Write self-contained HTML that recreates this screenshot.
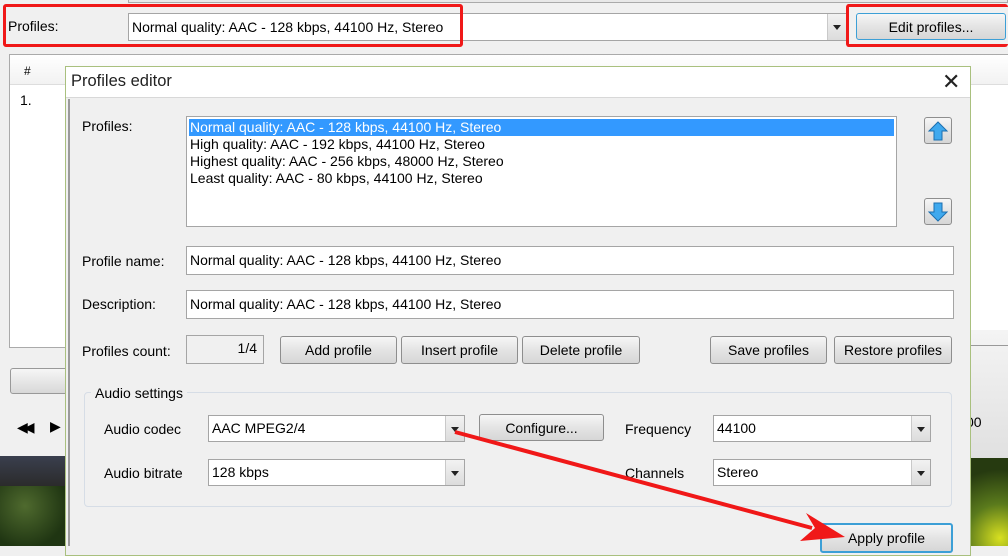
<!DOCTYPE html>
<html><head><meta charset="utf-8"><style>
*{box-sizing:border-box;margin:0;padding:0}
body{width:1008px;height:546px;overflow:hidden;background:#f0f0f0;font-family:"Liberation Sans",sans-serif;font-size:14px;color:#000;position:relative}
.a{position:absolute}
.field{position:absolute;background:#fff;border:1px solid #a5a5a5;padding:0 3px;line-height:26px;white-space:nowrap;overflow:hidden}
.btn{position:absolute;border:1px solid #8e8e8e;border-radius:3px;background:linear-gradient(#f6f6f6,#e4e4e4 50%,#d6d6d6);text-align:center;line-height:26px;white-space:nowrap}
.dd{position:absolute;top:0;right:0;bottom:0;width:19px;background:linear-gradient(#f2f2f2,#dcdcdc);border-left:1px solid #c9c9c9}
.dd:after{content:"";position:absolute;left:5px;top:11px;border-left:4px solid transparent;border-right:4px solid transparent;border-top:5px solid #222}
.red{position:absolute;border:3px solid #f01818;border-radius:3px}
</style></head><body>
<div class="a" style="left:128px;top:0;width:880px;height:3px;border:1px solid #aaa;border-top:none;background:#e8e8e8"></div>
<div class="a" style="left:8px;top:18px">Profiles:</div>
<div class="field" style="left:128px;top:13px;width:719px;height:28px">Normal quality: AAC - 128 kbps, 44100 Hz, Stereo<div class="dd"></div></div>
<div class="btn" style="left:856px;top:13px;width:150px;height:27px;border-color:#3c9fd6">Edit profiles...</div>
<div class="red" style="left:3px;top:4px;width:460px;height:43px"></div>
<div class="red" style="left:846px;top:4px;width:162px;height:43px;border-right:none"></div>
<div class="a" style="left:9px;top:54px;width:1000px;height:294px;background:#fff;border:1px solid #aaa"></div>
<div class="a" style="left:10px;top:55px;width:998px;height:30px;background:linear-gradient(#fff,#f2f2f2);border-bottom:1px solid #ddd"></div>
<div class="a" style="left:24px;top:64px;font-size:12px">#</div>
<div class="a" style="left:20px;top:92px">1.</div>
<div class="a" style="left:10px;top:368px;width:60px;height:26px;border:1px solid #999;border-radius:3px;background:linear-gradient(#f6f6f6,#d8d8d8)"></div>
<div class="a" style="left:17px;top:419px;font-size:14px;letter-spacing:-4px">◀◀</div>
<div class="a" style="left:50px;top:418px;font-size:14px">▶</div>
<div class="a" style="left:0;top:456px;width:70px;height:30px;background:linear-gradient(#3a3f4e,#2b2b2b)"></div>
<div class="a" style="left:0;top:486px;width:70px;height:60px;background:radial-gradient(circle at 25px 20px,#4f6a2e,#1f3512 70%)"></div>
<div class="a" style="left:970px;top:330px;width:38px;height:130px;background:linear-gradient(#f4f4f4,#e0e0e0)"></div>
<div class="a" style="left:970px;top:345px;width:38px;height:1px;background:#999"></div>
<div class="a" style="left:970px;top:458px;width:38px;height:88px;background:radial-gradient(circle at 30px 80px,#d8e020,#5a7a1c 40%,#263a10 80%)"></div>
<div class="a" style="left:966px;top:414px">00</div>
<div class="a" style="left:65px;top:66px;width:906px;height:490px;background:#f0f0f0;border:1px solid #a9c07e"></div>
<div class="a" style="left:66px;top:67px;width:904px;height:31px;background:#fff;border-bottom:1px solid #d8d8d8"></div>
<div class="a" style="left:71px;top:72px;font-size:16.5px;color:#222">Profiles editor</div>
<div class="a" style="left:942px;top:69px;font-size:22px;color:#222">✕</div>
<div class="a" style="left:68px;top:99px;width:2px;height:447px;background:#9a9a9a"></div>
<div class="a" style="left:82px;top:118px">Profiles:</div>
<div class="a" style="left:186px;top:116px;width:711px;height:111px;background:#fff;border:1px solid #a5a5a5;line-height:17px">
<div style="margin:2px 2px 0 2px;background:#3399ff;color:#fff;padding-left:1px">Normal quality: AAC - 128 kbps, 44100 Hz, Stereo</div>
<div style="padding-left:3px">High quality: AAC - 192 kbps, 44100 Hz, Stereo</div>
<div style="padding-left:3px">Highest quality: AAC - 256 kbps, 48000 Hz, Stereo</div>
<div style="padding-left:3px">Least quality: AAC - 80 kbps, 44100 Hz, Stereo</div></div>
<div class="btn" style="left:924px;top:117px;width:28px;height:27px"><svg width="22" height="22" viewBox="0 0 22 22" style="margin-top:2px"><path d="M11 2 L20 11 H15 V20 H7 V11 H2 Z" fill="#3fa9ee" stroke="#1b6fb0"/></svg></div>
<div class="btn" style="left:924px;top:198px;width:28px;height:27px"><svg width="22" height="22" viewBox="0 0 22 22" style="margin-top:2px"><path d="M11 20 L20 11 H15 V2 H7 V11 H2 Z" fill="#3fa9ee" stroke="#1b6fb0"/></svg></div>
<div class="a" style="left:82px;top:253px">Profile name:</div>
<div class="field" style="left:186px;top:246px;width:768px;height:29px">Normal quality: AAC - 128 kbps, 44100 Hz, Stereo</div>
<div class="a" style="left:82px;top:296px">Description:</div>
<div class="field" style="left:186px;top:290px;width:768px;height:29px">Normal quality: AAC - 128 kbps, 44100 Hz, Stereo</div>
<div class="a" style="left:82px;top:343px">Profiles count:</div>
<div class="a" style="left:186px;top:335px;width:78px;height:29px;border:1px solid #a5a5a5;text-align:right;padding:4px 6px">1/4</div>
<div class="btn" style="left:280px;top:336px;width:117px;height:28px">Add profile</div>
<div class="btn" style="left:401px;top:336px;width:117px;height:28px">Insert profile</div>
<div class="btn" style="left:522px;top:336px;width:118px;height:28px">Delete profile</div>
<div class="btn" style="left:710px;top:336px;width:117px;height:28px">Save profiles</div>
<div class="btn" style="left:834px;top:336px;width:118px;height:28px">Restore profiles</div>
<div class="a" style="left:84px;top:392px;width:868px;height:115px;border:1px solid #d6dde6;border-radius:4px"></div>
<div class="a" style="left:91px;top:385px;background:#f0f0f0;padding:0 4px">Audio settings</div>
<div class="a" style="left:104px;top:421px">Audio codec</div>
<div class="field" style="left:208px;top:415px;width:257px;height:27px;line-height:25px">AAC MPEG2/4<div class="dd"></div></div>
<div class="btn" style="left:479px;top:414px;width:125px;height:27px">Configure...</div>
<div class="a" style="left:625px;top:421px">Frequency</div>
<div class="field" style="left:713px;top:415px;width:218px;height:27px;line-height:25px">44100<div class="dd"></div></div>
<div class="a" style="left:104px;top:465px">Audio bitrate</div>
<div class="field" style="left:208px;top:459px;width:257px;height:27px;line-height:25px">128 kbps<div class="dd"></div></div>
<div class="a" style="left:625px;top:465px">Channels</div>
<div class="field" style="left:713px;top:459px;width:218px;height:27px;line-height:25px">Stereo<div class="dd"></div></div>
<div class="btn" style="left:820px;top:523px;width:133px;height:30px;border:2px solid #3c9fd6">Apply profile</div>
<svg class="a" style="left:0;top:0" width="1008" height="546"><line x1="455" y1="432" x2="812" y2="528" stroke="#f01818" stroke-width="4"/><path d="M845 537 L806 513 L815 528 L800 541 Z" fill="#f01818"/></svg>
</body></html>
